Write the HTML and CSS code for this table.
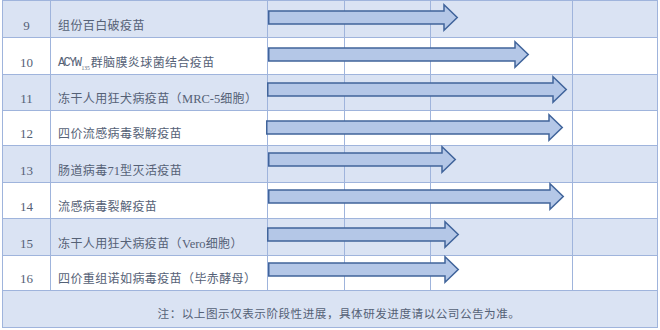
FILE: index.html
```html
<!DOCTYPE html>
<html lang="zh-CN">
<head>
<meta charset="utf-8">
<link rel="stylesheet" href="styles.css">
</head>
<body>
<div class="table">
  <div class="row blue h37">
    <div class="cell c1 num">9</div>
    <div class="cell c2 name">组份百白破疫苗</div>
    <div class="cell c3"></div><div class="cell c4"></div><div class="cell c5"></div><div class="cell c6"></div>
    <svg class="arrow" style="width:190px;margin-top:3px" height="27"><polygon points="0.75,7 176,7 176,0.75 189.25,13.5 176,26.25 176,20 0.75,20"/></svg>
  </div>
  <div class="row h37">
    <div class="cell c1 num">10</div>
    <div class="cell c2 name"><span class="mono">ACYW</span><sub class="sub">135</sub>群脑膜炎球菌结合疫苗</div>
    <div class="cell c3"></div><div class="cell c4"></div><div class="cell c5"></div><div class="cell c6"></div>
    <svg class="arrow" style="width:261px;margin-top:3px" height="27"><polygon points="0.75,7 247,7 247,0.75 260.25,13.5 247,26.25 247,20 0.75,20"/></svg>
  </div>
  <div class="row blue h36">
    <div class="cell c1 num">11</div>
    <div class="cell c2 name">冻干人用狂犬病疫苗（<span class="lat">MRC-5</span>细胞）</div>
    <div class="cell c3"></div><div class="cell c4"></div><div class="cell c5"></div><div class="cell c6"></div>
    <svg class="arrow" style="width:300px;margin-top:1px;margin-left:-1px" height="27"><polygon points="0.75,7 286,7 286,0.75 299.25,13.5 286,26.25 286,20 0.75,20"/></svg>
  </div>
  <div class="row h35">
    <div class="cell c1 num">12</div>
    <div class="cell c2 name">四价流感病毒裂解疫苗</div>
    <div class="cell c3"></div><div class="cell c4"></div><div class="cell c5"></div><div class="cell c6"></div>
    <svg class="arrow" style="width:297px;margin-top:3px;margin-left:-2px" height="27"><polygon points="0.75,7 283,7 283,0.75 296.25,13.5 283,26.25 283,20 0.75,20"/></svg>
  </div>
  <div class="row blue h37">
    <div class="cell c1 num">13</div>
    <div class="cell c2 name">肠道病毒<span class="lat">71</span>型灭活疫苗</div>
    <div class="cell c3"></div><div class="cell c4"></div><div class="cell c5"></div><div class="cell c6"></div>
    <svg class="arrow" style="width:188px;margin-top:0px" height="27"><polygon points="0.75,7 174,7 174,0.75 187.25,13.5 174,26.25 174,20 0.75,20"/></svg>
  </div>
  <div class="row h36">
    <div class="cell c1 num">14</div>
    <div class="cell c2 name">流感病毒裂解疫苗</div>
    <div class="cell c3"></div><div class="cell c4"></div><div class="cell c5"></div><div class="cell c6"></div>
    <svg class="arrow" style="width:296px;margin-top:0px" height="27"><polygon points="0.75,7 282,7 282,0.75 295.25,13.5 282,26.25 282,20 0.75,20"/></svg>
  </div>
  <div class="row blue h37">
    <div class="cell c1 num">15</div>
    <div class="cell c2 name">冻干人用狂犬病疫苗（<span class="lat">Vero</span>细胞）</div>
    <div class="cell c3"></div><div class="cell c4"></div><div class="cell c5"></div><div class="cell c6"></div>
    <svg class="arrow" style="width:192px;margin-top:2px;margin-left:-1px" height="27"><polygon points="0.75,7 178,7 178,0.75 191.25,13.5 178,26.25 178,20 0.75,20"/></svg>
  </div>
  <div class="row h35">
    <div class="cell c1 num">16</div>
    <div class="cell c2 name">四价重组诺如病毒疫苗（毕赤酵母）</div>
    <div class="cell c3"></div><div class="cell c4"></div><div class="cell c5"></div><div class="cell c6"></div>
    <svg class="arrow" style="width:191px;margin-top:0px" height="27"><polygon points="0.75,7 177,7 177,0.75 190.25,13.5 177,26.25 177,20 0.75,20"/></svg>
  </div>
  <div class="note blue h37">注：以上图示仅表示阶段性进展，具体研发进度请以公司公告为准。</div>
</div>
</body>
</html>
```

FILE: styles.css
```css
* { box-sizing: border-box; }
html, body { margin: 0; padding: 0; background: #ffffff; }
body { width: 660px; height: 330px; overflow: hidden; }

.table {
  margin-left: 2px;
  width: 656px;
  border-top: 1px solid #9fb4dc;
  border-left: 1px solid #9fb4dc;
  display: flex;
  flex-direction: column;
  font-family: "Liberation Serif", "Noto Sans CJK SC", serif;
  color: #556176;
}

.row {
  display: grid;
  grid-template-columns: 48px 217px 77px 86px 142px 85px;
  grid-template-rows: 100%;
}
.h37 { height: 37px; }
.h36 { height: 36px; }
.h35 { height: 35px; }

.blue { background: #dae3f3; }

.cell {
  grid-row: 1;
  border-right: 1px solid #9fb4dc;
  border-bottom: 1px solid #9fb4dc;
  display: flex;
  align-items: flex-end;
  padding-bottom: 3px;
  line-height: 16px;
}
.c1 { grid-column: 1; justify-content: center; }
.c2 { grid-column: 2; }
.c3 { grid-column: 3; }
.c4 { grid-column: 4; }
.c5 { grid-column: 5; }
.c6 { grid-column: 6; }

.num { font-size: 13px; }
.name {
  font-size: 12px;
  letter-spacing: 0.4px;
  padding-left: 7px;
  white-space: nowrap;
}
.lat { font-family: "Liberation Serif", serif; font-size: 12.5px; letter-spacing: 0; }
.mono { font-family: "Liberation Mono", monospace; font-size: 12px; letter-spacing: -1.6px; }
.sub { font-size: 5.5px; vertical-align: -1px; line-height: 1; letter-spacing: 0; margin-left: 1px; margin-right: 1px; }

.arrow {
  grid-row: 1;
  grid-column: 3 / 7;
  align-self: start;
  justify-self: start;
  z-index: 1;
  overflow: visible;
}
.arrow polygon {
  fill: #b4c7e7;
  stroke: #40649b;
  stroke-width: 1.5;
  stroke-linejoin: miter;
}

.note {
  border-right: 1px solid #9fb4dc;
  border-bottom: 1px solid #9fb4dc;
  display: flex;
  align-items: flex-end;
  justify-content: center;
  padding-bottom: 4px;
  padding-left: 18px;
  font-size: 11.6px;
  letter-spacing: 0.5px;
  line-height: 16px;
  white-space: nowrap;
}
```
